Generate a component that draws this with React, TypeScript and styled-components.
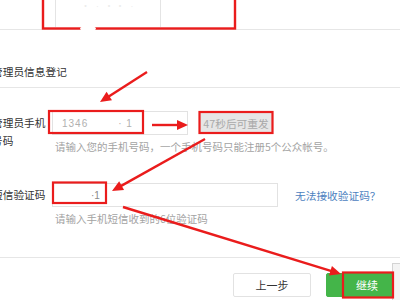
import React from "react";
import styled, { createGlobalStyle } from "styled-components";

const Global = createGlobalStyle`
  html, body { margin: 0; padding: 0; background: #fff; }
  body {
    width: 400px; height: 300px; overflow: hidden;
    font-family: "Noto Sans CJK SC", "Noto Sans", sans-serif;
  }
`;

const Page = styled.div`
  position: relative;
  width: 400px;
  height: 300px;
  overflow: hidden;
  background: #fff;
`;

const Content = styled.div`
  margin-left: -8px;
  width: 416px;
`;

const TopBar = styled.div`
  height: 29px;
  border-bottom: 1px solid #e6e6e6;
  padding-left: 63px;
  display: flex;
`;

const QrBox = styled.div`
  width: 104px;
  height: 27px;
  border-left: 1px solid #e4e4e4;
  border-right: 1px solid #e4e4e4;
  display: flex;
  justify-content: center;
  font-size: 9px;
  line-height: 12px;
  color: #ececec;
  letter-spacing: 2px;
`;

const Title = styled.div`
  padding: 34px 0 7px;
  line-height: 16px;
  font-size: 10.7px;
  color: #333;
  border-bottom: 1px solid #e6e6e6;
  white-space: nowrap;
`;

const Form = styled.div`
  padding-top: 23px;
`;

const Row = styled.div<{ $top?: number }>`
  display: flex;
  gap: 6px;
  margin-top: ${(p) => p.$top ?? 0}px;
`;

const Label = styled.div`
  width: 54px;
  flex: none;
  padding-top: 3px;
  line-height: 18px;
  font-size: 10.7px;
  color: #333;
`;

const Field = styled.div`
  display: flex;
  flex-direction: column;
`;

const InputLine = styled.div<{ $gap: number }>`
  display: flex;
  align-items: center;
  gap: ${(p) => p.$gap}px;
`;

const Input = styled.div<{ $w: number; $indent: number }>`
  box-sizing: border-box;
  width: ${(p) => p.$w}px;
  height: 24px;
  border: 1px solid #e2e2e2;
  padding-left: ${(p) => p.$indent}px;
  display: flex;
  align-items: center;
  font-family: "Liberation Sans", sans-serif;
  font-size: 10px;
  color: #8a8a8a;
  white-space: pre;
`;

const Faint = styled.span<{ $left?: number }>`
  color: #b0b0b0;
  letter-spacing: 1px;
  margin-left: ${(p) => p.$left ?? 0}px;
`;

const CountBtn = styled.div`
  box-sizing: border-box;
  width: 74px;
  height: 22px;
  background: #e6e6e6;
  display: flex;
  align-items: center;
  justify-content: center;
  font-size: 10.7px;
  color: #a9a9a9;
  white-space: nowrap;
`;

const Hint = styled.div`
  margin-top: 4px;
  padding-left: 3px;
  line-height: 16px;
  font-size: 10.5px;
  color: #a3a3a3;
  white-space: nowrap;
`;

const Link = styled.span`
  font-size: 10.7px;
  color: #4d82c0;
  white-space: nowrap;
`;

const Footer = styled.div`
  margin-top: 30px;
  border-top: 1px solid #e6e6e6;
  padding: 15px 0 0 241px;
  display: flex;
  gap: 15px;
`;

const Button = styled.div<{ $primary?: boolean; $w: number }>`
  box-sizing: border-box;
  width: ${(p) => p.$w}px;
  height: 24px;
  border: 1px solid ${(p) => (p.$primary ? "#44b549" : "#e2e2e2")};
  background: ${(p) => (p.$primary ? "#44b549" : "#fff")};
  color: ${(p) => (p.$primary ? "#fff" : "#333")};
  border-radius: 2px;
  display: flex;
  align-items: center;
  justify-content: center;
  font-size: 11px;
  flex: none;
`;

const SideWidget = styled.div`
  position: absolute;
  right: -2px;
  top: 263px;
  width: 8px;
  height: 40px;
  background: #f4f4f4;
  border: 1px solid #d4d4d4;
`;

const Overlay = styled.svg`
  position: absolute;
  left: 0;
  top: 0;
  pointer-events: none;
`;

const RED = "#ea1c1c";

const Arrow: React.FC<{ x1: number; y1: number; x2: number; y2: number }> = ({ x1, y1, x2, y2 }) => {
  const dx = x2 - x1;
  const dy = y2 - y1;
  const len = Math.hypot(dx, dy);
  const ux = dx / len;
  const uy = dy / len;
  const hl = 11;
  const hw = 5;
  const bx = x2 - ux * hl;
  const by = y2 - uy * hl;
  const pts = `${x2},${y2} ${bx - uy * hw},${by + ux * hw} ${bx + uy * hw},${by - ux * hw}`;
  return (
    <g>
      <line x1={x1} y1={y1} x2={bx + ux * 2} y2={by + uy * 2} stroke={RED} strokeWidth={2.4} />
      <polygon points={pts} fill={RED} />
    </g>
  );
};

export default function App() {
  return (
    <Page>
      <Global />
      <Content>
        <TopBar>
          <QrBox>· ∙ ·· ∙</QrBox>
        </TopBar>
        <Title>管理员信息登记</Title>
        <Form>
          <Row>
            <Label>管理员手机号码</Label>
            <Field>
              <InputLine $gap={11}>
                <Input $w={136} $indent={9}>
                  <Faint>1346</Faint>
                  <Faint $left={30}>· 1</Faint>
                </Input>
                <CountBtn>47秒后可重发</CountBtn>
              </InputLine>
              <Hint>请输入您的手机号码，一个手机号码只能注册5个公众帐号。</Hint>
            </Field>
          </Row>
          <Row $top={28}>
            <Label>短信验证码</Label>
            <Field>
              <InputLine $gap={17}>
                <Input $w={226} $indent={38}>
                  <span>·1</span>
                </Input>
                <Link>无法接收验证码？</Link>
              </InputLine>
              <Hint>请输入手机短信收到的6位验证码</Hint>
            </Field>
          </Row>
        </Form>
        <Footer>
          <Button $w={78}>上一步</Button>
          <Button $primary $w={82}>继续</Button>
        </Footer>
      </Content>
      <SideWidget />
      <Overlay width={400} height={300} viewBox="0 0 400 300">
        <rect x={43} y={-10} width={192} height={38.5} fill="none" stroke={RED} strokeWidth={2.4} />
        <ellipse cx={88} cy={28.5} rx={8} ry={3} fill="#fff" />
        <rect x={49} y={111} width={94} height={22} fill="none" stroke={RED} strokeWidth={2.2} />
        <rect x={199.5} y={112} width={73} height={21} fill="none" stroke={RED} strokeWidth={2.2} />
        <rect x={53} y={182.5} width={53} height={20.5} fill="none" stroke={RED} strokeWidth={2.2} />
        <rect x={343} y={272.5} width={50} height={25} fill="none" stroke={RED} strokeWidth={2.2} />
        <Arrow x1={147} y1={72} x2={100} y2={102} />
        <Arrow x1={152} y1={125} x2={188} y2={125} />
        <Arrow x1={205} y1={139} x2={112} y2={191} />
        <Arrow x1={123} y1={207} x2={341} y2={274} />
      </Overlay>
    </Page>
  );
}
